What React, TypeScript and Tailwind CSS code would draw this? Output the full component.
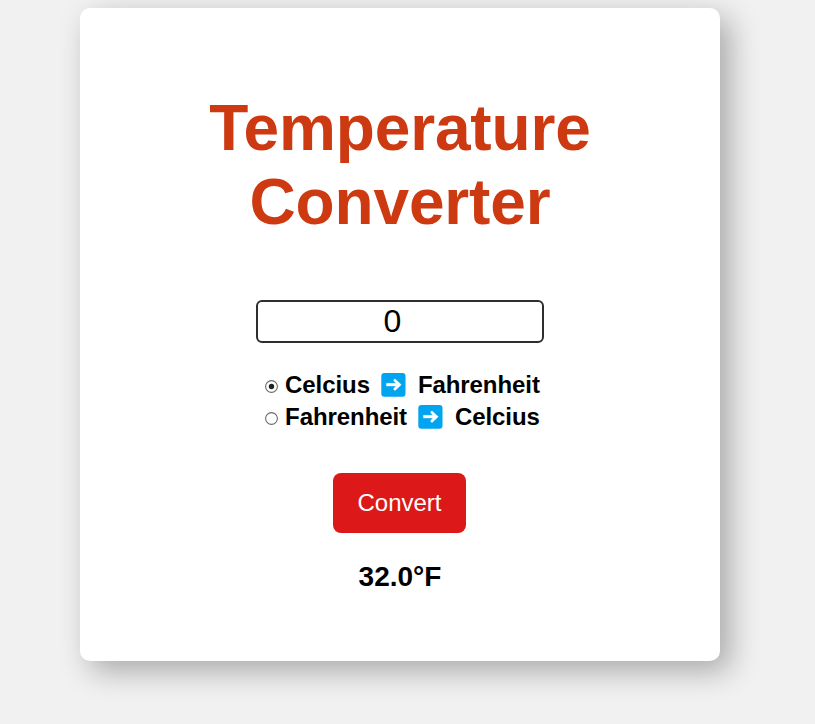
import React from "react";

function ArrowEmoji() {
  return (
    <svg className="mr-3 ml-[11px] inline-block h-6 w-[25px] align-[-4px]" viewBox="0 0 25 24">
      <rect x="0.3" width="24.2" height="23.8" rx="3" fill="#00a4ef" />
      <path
        d="M5.4 10.3H15L12.8 8.1V6.5L14.2 6L20.3 11.7L14.2 17.4L12.8 16.9V15.3L15 13.1H5.4Z"
        fill="#fff"
        stroke="#fff"
        strokeWidth="0.3"
        strokeLinejoin="round"
      />
    </svg>
  );
}

function Radio({ checked = false }: { checked?: boolean }) {
  return (
    <svg className="mr-[7.6px] inline-block h-[13px] w-[13px] align-[0px]" viewBox="0 0 13 13">
      <circle cx="6.5" cy="6.5" r="5.9" fill="#fff" stroke="#6b6b6b" strokeWidth="1.1" />
      {checked && <circle cx="6.5" cy="6.5" r="2.7" fill="#222" />}
    </svg>
  );
}

export default function App() {
  return (
    <div className="h-[724px] overflow-hidden bg-[#f1f1f1] pt-2 font-['Liberation_Sans',Arial,sans-serif] text-black">
      <form className="ml-20 flex h-[653px] w-[640px] flex-col items-center rounded-[10px] bg-white shadow-[10px_10px_30px_rgba(0,0,0,0.3)]">
        <h1 className="mt-[83px] text-center text-[64px] leading-[74px] font-bold tracking-[-0.15px] text-[#cd3910]">
          Temperature
          <br />
          Converter
        </h1>
        <div className="mt-[61px] flex h-[43px] w-[288px] items-center justify-center rounded-[6px] border-2 border-[#2e2e2e] pr-[15px] pb-0.5 text-[32px] leading-none">
          0
        </div>
        <div className="mt-[26px] ml-2 w-[279px] text-2xl leading-8 font-bold tracking-[-0.08px] whitespace-nowrap">
          <div><Radio checked />Celcius<ArrowEmoji />Fahrenheit</div>
          <div><Radio />Fahrenheit<ArrowEmoji />Celcius</div>
        </div>
        <button type="button" className="mt-10 mr-px h-[60px] w-[133px] rounded-lg bg-[#dc1818] text-2xl text-white">
          Convert
        </button>
        <p className="mt-7 text-[28px] leading-8 font-bold">32.0°F</p>
      </form>
    </div>
  );
}
